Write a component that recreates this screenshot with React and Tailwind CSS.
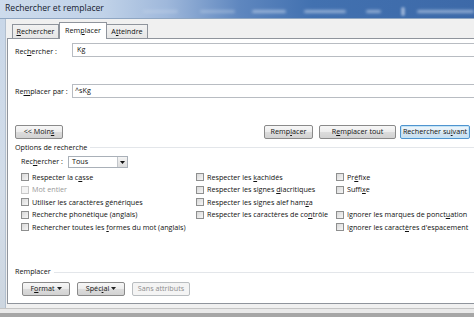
import React from 'react';

const Btn = ({ children, w, variant = 'normal' }) => {
  const base = 'h-[14px] flex items-center justify-center shrink-0 rounded-[2px] border leading-none';
  const styles = {
    normal: 'border-[#8a8a8a] bg-[linear-gradient(180deg,#f7f7f7_0%,#ececec_50%,#dcdcdc_51%,#d2d2d2_100%)] text-[#111]',
    primary: 'border-[#4f94cf] bg-[linear-gradient(180deg,#eef6fb_0%,#e2eef7_50%,#d3e6f3_51%,#c8def0_100%)] text-[#111] shadow-[inset_0_0_0_1px_#c4e4f6]',
    disabled: 'border-[#b9bdc0] bg-[#f4f4f4] text-[#8d8d8d]',
  };
  return <div className={`${base} ${styles[variant]} ${w}`}>{children}</div>;
};

const Check = ({ children, disabled }) => (
  <div className="flex items-center h-[12.5px] whitespace-nowrap">
    <span
      className={`w-[8px] h-[8px] shrink-0 border ${
        disabled
          ? 'border-[#c8c8c8] bg-[#f4f4f4]'
          : 'border-[#8e8f8f] bg-[linear-gradient(135deg,#d8d8d8_0%,#f6f6f6_100%)]'
      }`}
    ></span>
    <span className={`ml-[3px] ${disabled ? 'text-[#9a9a9a]' : 'text-[#111]'}`}>{children}</span>
  </div>
);

const Empty = () => <div className="h-[12.5px]"></div>;

const Arrow = () => (
  <svg width="5" height="3" viewBox="0 0 5 3" className="ml-[2px]">
    <path d="M0 0h5L2.5 3z" fill="#222" />
  </svg>
);

export default function App() {
  return (
    <div className="w-[474px] h-[317px] overflow-hidden bg-[#f0f0f0] font-['Open_Sans',sans-serif] text-[7.2px] text-[#111]">
      <div className="w-[520px] h-[317px] flex flex-col">
        {/* Title bar */}
        <div className="h-[19px] shrink-0 flex items-center bg-[linear-gradient(90deg,#cddbec_0%,#c0d2e8_20%,#9fb8db_32%,#5f87bf_46%,#4271b0_60%,#3b67a6_100%)] border-b border-[#8fa6c2]">
          <span className="w-[95px] shrink-0 pl-[5px] text-[8.6px] text-[#15202e] leading-none pb-[1px] whitespace-nowrap">
            Rechercher et remplacer
          </span>
          <span className="ml-[48px] w-[35px] h-[3px] mt-[5px] rounded-full bg-[#c9d7ea] opacity-40 blur-[1.5px]"></span>
          <span className="ml-[22px] w-[35px] h-[3px] mt-[5px] rounded-full bg-[#c9d7ea] opacity-40 blur-[1.5px]"></span>
          <span className="ml-[17px] w-[34px] h-[3px] mt-[5px] rounded-full bg-[#b7cae6] opacity-70 blur-[1.5px]"></span>
          <span className="ml-[18px] w-[42px] h-[3px] mt-[5px] rounded-full bg-[#b7cae6] opacity-70 blur-[1.5px]"></span>
          <span className="ml-[20px] w-[15px] h-[3px] mt-[5px] rounded-full bg-[#b7cae6] opacity-70 blur-[1.5px]"></span>
          <span className="ml-[20px] w-[4px] h-[9px] mt-[4px] rounded-full bg-[#b7cae6] opacity-70 blur-[1px]"></span>
          <span className="ml-[12px] w-[57px] h-[3px] mt-[5px] rounded-full bg-[#b7cae6] opacity-70 blur-[1.5px]"></span>
        </div>

        {/* Middle */}
        <div className="h-[289px] shrink-0 flex">
          <div className="w-[6px] shrink-0 bg-[linear-gradient(180deg,#c9d7e8_0%,#d3dde9_60%,#cdd6e0_100%)] border-r border-[#b3c0cf]"></div>
          <div className="flex-1 flex flex-col pl-[1px]">
            {/* Tabs */}
            <div className="h-[19px] shrink-0 flex items-end pl-[5px]">
              <div className="w-[47px] h-[14px] flex items-center justify-center border border-b-0 border-[#8f949c] bg-[linear-gradient(180deg,#f2f2f2_0%,#e6e6e6_100%)] leading-none">
                <span><u>R</u>echercher</span>
              </div>
              <div className="w-[48px] h-[17px] -mb-[1px] relative z-10 flex items-center justify-center border border-b-0 border-[#8f949c] bg-white leading-none pb-[1px]">
                <span>Rem<u>p</u>lacer</span>
              </div>
              <div className="w-[41px] h-[14px] flex items-center justify-center border border-b-0 border-l-0 border-[#8f949c] bg-[linear-gradient(180deg,#f2f2f2_0%,#e6e6e6_100%)] leading-none">
                <span>A<u>t</u>teindre</span>
              </div>
            </div>

            {/* Panel */}
            <div className="h-[266px] shrink-0 border border-r-0 border-[#8f949c] bg-white flex flex-col pl-[7px] leading-none">
              <div className="mt-[4px] flex items-center h-[14px]">
                <span className="w-[57px] shrink-0 pt-[3px]">Rec<u>h</u>ercher :</span>
                <div className="flex-1 h-[14px] border border-[#b8bcc2] flex items-center pl-[4px]">Kg</div>
              </div>
              <div className="mt-[27px] flex items-center h-[14px]">
                <span className="w-[57px] shrink-0 pt-[2px]">Re<u>m</u>placer par :</span>
                <div className="flex-1 h-[14px] border border-[#b8bcc2] flex items-center pl-[2px]">^sKg</div>
              </div>

              <div className="mt-[27px] flex items-center">
                <Btn w="w-[48px]">&lt;&lt; Moin<u>s</u></Btn>
                <div className="ml-[201px]">
                  <Btn w="w-[49px]">Remp<u>l</u>acer</Btn>
                </div>
                <div className="ml-[6px]">
                  <Btn w="w-[77px]">R<u>e</u>mplacer tout</Btn>
                </div>
                <div className="ml-[4px]">
                  <Btn w="w-[70px]" variant="primary">Rechercher su<u>i</u>vant</Btn>
                </div>
              </div>

              <div className="mt-[4px] h-[9px] flex items-center">
                <span className="shrink-0">Options de recherche</span>
                <span className="ml-[3px] flex-1 h-px bg-[#e3e6ea]"></span>
              </div>

              <div className="mt-[4px] pl-[6px] flex items-center h-[12px]">
                <span className="w-[47px] shrink-0">Rec<u>h</u>ercher :</span>
                <div className="w-[60px] h-[12px] border border-[#a9b0b8] bg-white flex items-center">
                  <span className="flex-1 pl-[3px]">Tous</span>
                  <span className="w-[10px] h-[10px] border-l border-[#c3c7cc] bg-[linear-gradient(180deg,#f4f4f4_0%,#dcdcdc_100%)] flex items-center justify-center">
                    <svg width="5" height="3" viewBox="0 0 5 3">
                      <path d="M0 0h5L2.5 3z" fill="#111" />
                    </svg>
                  </span>
                </div>
              </div>

              <div className="mt-[3px] pl-[6px] grid grid-cols-[175px_140px_1fr]">
                <div className="flex flex-col">
                  <Check>Respecter la c<u>a</u>sse</Check>
                  <Check disabled>Mot entier</Check>
                  <Check>Utiliser les caractères <u>g</u>énériques</Check>
                  <Check>Recherche phonétique (anglais)</Check>
                  <Check>Rechercher toutes les <u>f</u>ormes du mot (anglais)</Check>
                </div>
                <div className="flex flex-col">
                  <Check>Respecter les <u>k</u>achidés</Check>
                  <Check>Respecter les signes <u>d</u>iacritiques</Check>
                  <Check>Respecter les signes alef ham<u>z</u>a</Check>
                  <Check>Respecter les caractères de co<u>n</u>trôle</Check>
                </div>
                <div className="flex flex-col">
                  <Check>Pr<u>é</u>fixe</Check>
                  <Check>Suffi<u>x</u>e</Check>
                  <Empty />
                  <Check>Ignorer les marques de ponct<u>u</u>ation</Check>
                  <Check>Ignorer les caract<u>è</u>res d'espacement</Check>
                </div>
              </div>

              <div className="mt-[34px] h-[9px] flex items-center">
                <span className="shrink-0">Remplacer</span>
                <span className="ml-[3px] flex-1 h-px bg-[#e3e6ea]"></span>
              </div>

              <div className="mt-[5px] pl-[7px] flex items-center">
                <Btn w="w-[48px]">F<u>o</u>rmat<Arrow /></Btn>
                <div className="ml-[7px]">
                  <Btn w="w-[48px]">Spéc<u>i</u>al<Arrow /></Btn>
                </div>
                <div className="ml-[7px]">
                  <Btn w="w-[58px]" variant="disabled">Sans attributs</Btn>
                </div>
              </div>
            </div>
          </div>
        </div>

        {/* Bottom frame */}
        <div className="h-[9px] shrink-0 flex flex-col">
          <div className="h-px bg-[#c4c4c4]"></div>
          <div className="h-[4px] bg-[#e9e9e9]"></div>
          <div className="h-[4px] bg-[#a6a6a6]"></div>
        </div>
      </div>
    </div>
  );
}
